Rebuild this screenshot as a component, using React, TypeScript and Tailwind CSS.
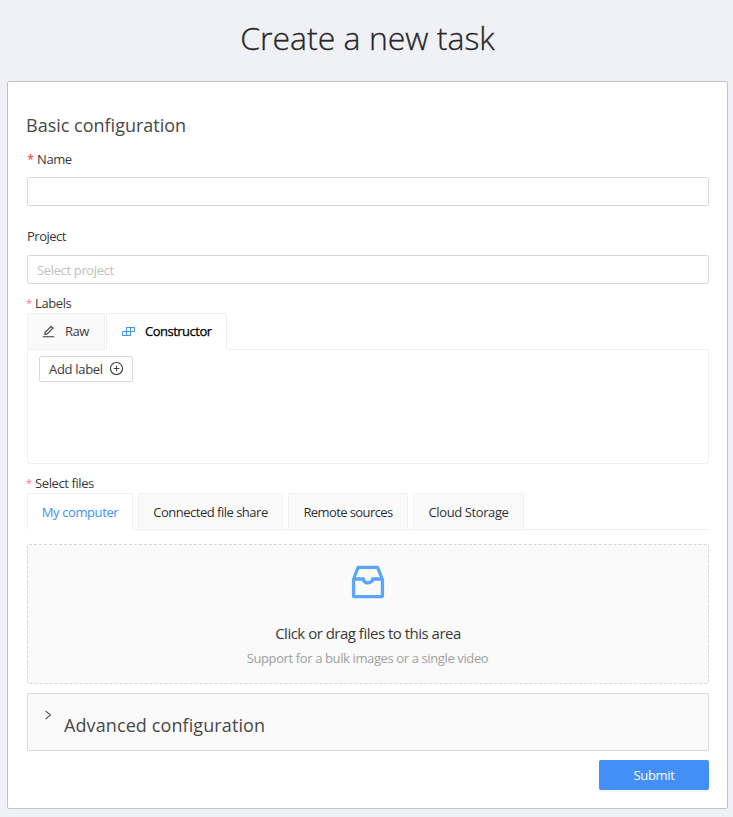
import type { ReactNode } from "react";
import {
  AiOutlineBuild,
  AiOutlineEdit,
  AiOutlineInbox,
  AiOutlinePlusCircle,
  AiOutlineRight,
} from "react-icons/ai";

function RequiredLabel({ children }: { children: ReactNode }) {
  return (
    <div className="flex h-5 items-center gap-[3px] text-[13px] leading-5 tracking-[-0.4px]">
      <span className="-ml-px w-[6px] text-[11px] text-[#ff7875]">*</span>
      <span>{children}</span>
    </div>
  );
}

function FileTab({
  label,
  width,
  spacing = "tracking-[-0.5px]",
  active = false,
}: {
  label: string;
  width: string;
  spacing?: string;
  active?: boolean;
}) {
  return (
    <button
      className={`${width} ${spacing} h-[37px] shrink-0 rounded-t-[2px] border border-[#f0f0f0] pt-[2px] whitespace-nowrap text-[13px] ${
        active ? "border-b-white bg-white text-[#4190f7]" : "bg-[#fafafa] text-black/85"
      }`}
    >
      {label}
    </button>
  );
}

export default function App() {
  return (
    <main className="h-[817px] w-[733px] overflow-hidden bg-[#f0f1f5] pl-[7px] font-['Open_Sans','Noto_Sans',sans-serif] text-[13px] text-[#3a3a3a]">
      <h1 className="flex h-[81px] w-[721px] items-center justify-center pb-[6px] text-[32px] font-light text-[#262626] [-webkit-text-stroke:0.3px_#262626]">
        Create a new task
      </h1>
      <form className="h-[728px] w-[721px] rounded-[2px] border border-[#c3c3c3] bg-white pt-[31px] pr-[18px] pl-[19px]">
        <h2 className="-ml-px h-6 text-[18px] leading-6 font-normal text-[#484848]">Basic configuration</h2>
        <div className="mt-[12px] flex h-5 items-center gap-[4px] leading-5 tracking-[-0.4px]">
          <span className="w-[6px] text-[13px] text-[#f5322d]">*</span>
          <span>Name</span>
        </div>
        <input className="mt-2 block h-[29px] w-full rounded-[2px] border border-[#d9d9d9]" />
        <div className="mt-[20px] h-5 leading-5 tracking-[-0.5px]">Project</div>
        <input
          placeholder="Select project"
          className="mt-[9px] block h-[29px] w-full rounded-[2px] border border-[#d9d9d9] px-[9px] text-[13px] tracking-[-0.35px] placeholder:text-[#bfbfbf]"
        />

        <div className="mt-[9px]">
          <RequiredLabel>Labels</RequiredLabel>
        </div>
        <div className="flex h-[37px] gap-[1px]">
          <button className="flex h-[37px] w-[78px] items-center rounded-t-[2px] border border-[#f0f0f0] bg-[#fafafa] pl-[13px] tracking-[-0.45px]">
            <AiOutlineEdit size={15} />
            <span className="ml-[9px]">Raw</span>
          </button>
          <button className="flex h-[37px] w-[121px] items-center rounded-t-[2px] border border-[#f0f0f0] border-b-white bg-white pl-[14px] tracking-[-0.5px] text-black">
            <AiOutlineBuild size={15} className="text-[#4190f7]" />
            <span className="ml-[9px] [-webkit-text-stroke:0.25px_#000]">Constructor</span>
          </button>
          <div className="h-[37px] flex-1 border-b border-[#f0f0f0]" />
        </div>
        <div className="h-[114px] rounded-b-[4px] border border-t-0 border-[#f0f0f0] pt-[6px] pl-[11px]">
          <button className="flex h-[26px] w-[94px] items-center rounded-[2px] border border-[#d9d9d9] bg-white pl-[9px] tracking-[-0.3px] shadow-[0_2px_0_rgba(0,0,0,0.015)]">
            <span className="pt-[2px]">Add label</span>
            <AiOutlinePlusCircle size={15} className="mb-px ml-[6px]" />
          </button>
        </div>

        <div className="mt-[9px]">
          <RequiredLabel>Select files</RequiredLabel>
        </div>
        <div className="flex h-[37px]">
          <FileTab label="My computer" width="w-[106px]" spacing="tracking-[-0.4px]" active />
          <div className="w-[5px] border-b border-[#f0f0f0]" />
          <FileTab label="Connected file share" width="w-[145px]" />
          <div className="w-[5px] border-b border-[#f0f0f0]" />
          <FileTab label="Remote sources" width="w-[120px]" spacing="tracking-[-0.6px]" />
          <div className="w-[5px] border-b border-[#f0f0f0]" />
          <FileTab label="Cloud Storage" width="w-[111px]" spacing="tracking-[-0.4px]" />
          <div className="flex-1 border-b border-[#f0f0f0]" />
        </div>
        <section className="mt-[14px] flex h-[140px] flex-col items-center rounded-[2px] border border-dashed border-[#d9d9d9] bg-[#fafafa] pt-[15px]">
          <AiOutlineInbox size={44} className="mr-px text-[#5ba5fb]" />
          <p className="mt-[17px] h-6 text-[15px] leading-6 tracking-[-0.5px]">Click or drag files to this area</p>
          <p className="mt-[3px] mr-px h-5 text-[13px] leading-5 tracking-[-0.38px] text-[#a0a0a0]">
            Support for a bulk images or a single video
          </p>
        </section>
        <section className="mt-[9px] flex h-[58px] rounded-[2px] border border-[#d9d9d9] bg-[#fafafa] pl-[14px]">
          <AiOutlineRight size={12} className="mt-[15px]" />
          <h2 className="mt-[19px] ml-[10px] h-6 text-[18px] leading-6 font-normal tracking-[0.1px] text-[#484848]">
            Advanced configuration
          </h2>
        </section>
        <button className="mt-[9px] ml-auto block h-[30px] w-[110px] rounded-[2px] bg-[#428ff8] pt-[2px] text-[13px] tracking-[-0.3px] text-white shadow-[0_2px_0_rgba(0,0,0,0.035)]">
          Submit
        </button>
      </form>
    </main>
  );
}
